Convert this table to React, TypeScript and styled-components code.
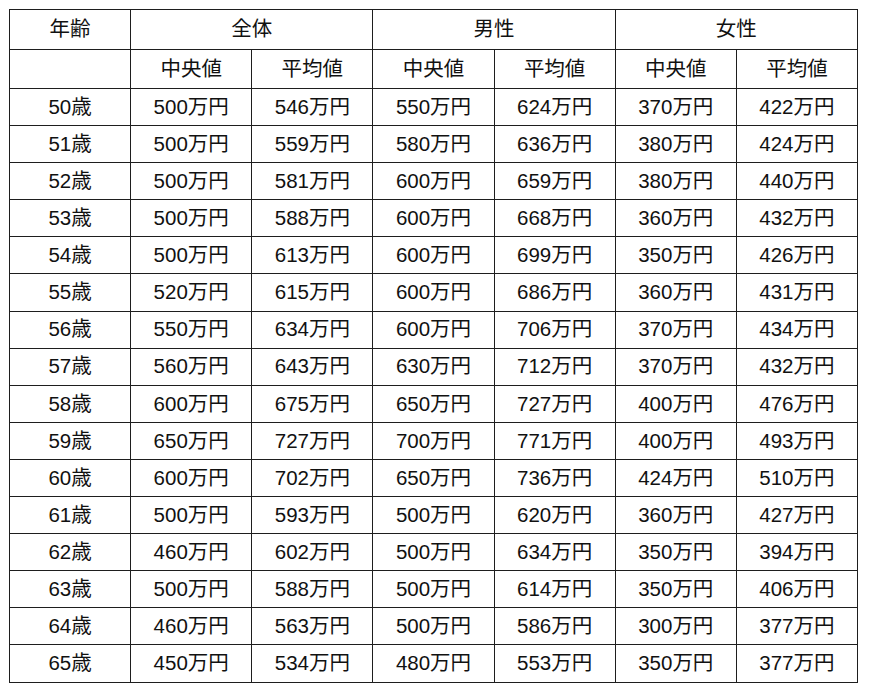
import React from "react";
import styled, { createGlobalStyle } from "styled-components";

const Global = createGlobalStyle`
  html, body { margin: 0; padding: 0; background: #fff; }
  body { font-family: "Liberation Sans", "Noto Sans CJK JP", sans-serif; color: #111; }
`;

const Page = styled.div`
  padding: 9px 0 0 9px;
`;

const Table = styled.table`
  border-collapse: collapse;
  width: 849px;
  table-layout: fixed;
  font-size: 20.5px;
`;

const HeadRow = styled.tr`
  height: 39.5px;
`;

const Row = styled.tr`
  height: 37.1px;
`;

const Cell = styled.td`
  border: 1px solid #1e1e1e;
  text-align: center;
  vertical-align: middle;
  padding: 0;
  line-height: 1;
`;

const HeadCell = styled(Cell).attrs({ as: "th" })`
  font-weight: normal;
`;

const rows: [string, string, string, string, string, string, string][] = [
  ["50歳", "500", "546", "550", "624", "370", "422"],
  ["51歳", "500", "559", "580", "636", "380", "424"],
  ["52歳", "500", "581", "600", "659", "380", "440"],
  ["53歳", "500", "588", "600", "668", "360", "432"],
  ["54歳", "500", "613", "600", "699", "350", "426"],
  ["55歳", "520", "615", "600", "686", "360", "431"],
  ["56歳", "550", "634", "600", "706", "370", "434"],
  ["57歳", "560", "643", "630", "712", "370", "432"],
  ["58歳", "600", "675", "650", "727", "400", "476"],
  ["59歳", "650", "727", "700", "771", "400", "493"],
  ["60歳", "600", "702", "650", "736", "424", "510"],
  ["61歳", "500", "593", "500", "620", "360", "427"],
  ["62歳", "460", "602", "500", "634", "350", "394"],
  ["63歳", "500", "588", "500", "614", "350", "406"],
  ["64歳", "460", "563", "500", "586", "300", "377"],
  ["65歳", "450", "534", "480", "553", "350", "377"],
];

export default function App() {
  return (
    <Page>
      <Global />
      <Table>
        <thead>
          <HeadRow>
            <HeadCell>年齢</HeadCell>
            <HeadCell colSpan={2}>全体</HeadCell>
            <HeadCell colSpan={2}>男性</HeadCell>
            <HeadCell colSpan={2}>女性</HeadCell>
          </HeadRow>
          <HeadRow>
            <HeadCell></HeadCell>
            <HeadCell>中央値</HeadCell>
            <HeadCell>平均値</HeadCell>
            <HeadCell>中央値</HeadCell>
            <HeadCell>平均値</HeadCell>
            <HeadCell>中央値</HeadCell>
            <HeadCell>平均値</HeadCell>
          </HeadRow>
        </thead>
        <tbody>
          {rows.map((r) => (
            <Row key={r[0]}>
              <Cell>{r[0]}</Cell>
              {r.slice(1).map((v, i) => (
                <Cell key={i}>{v}万円</Cell>
              ))}
            </Row>
          ))}
        </tbody>
      </Table>
    </Page>
  );
}
